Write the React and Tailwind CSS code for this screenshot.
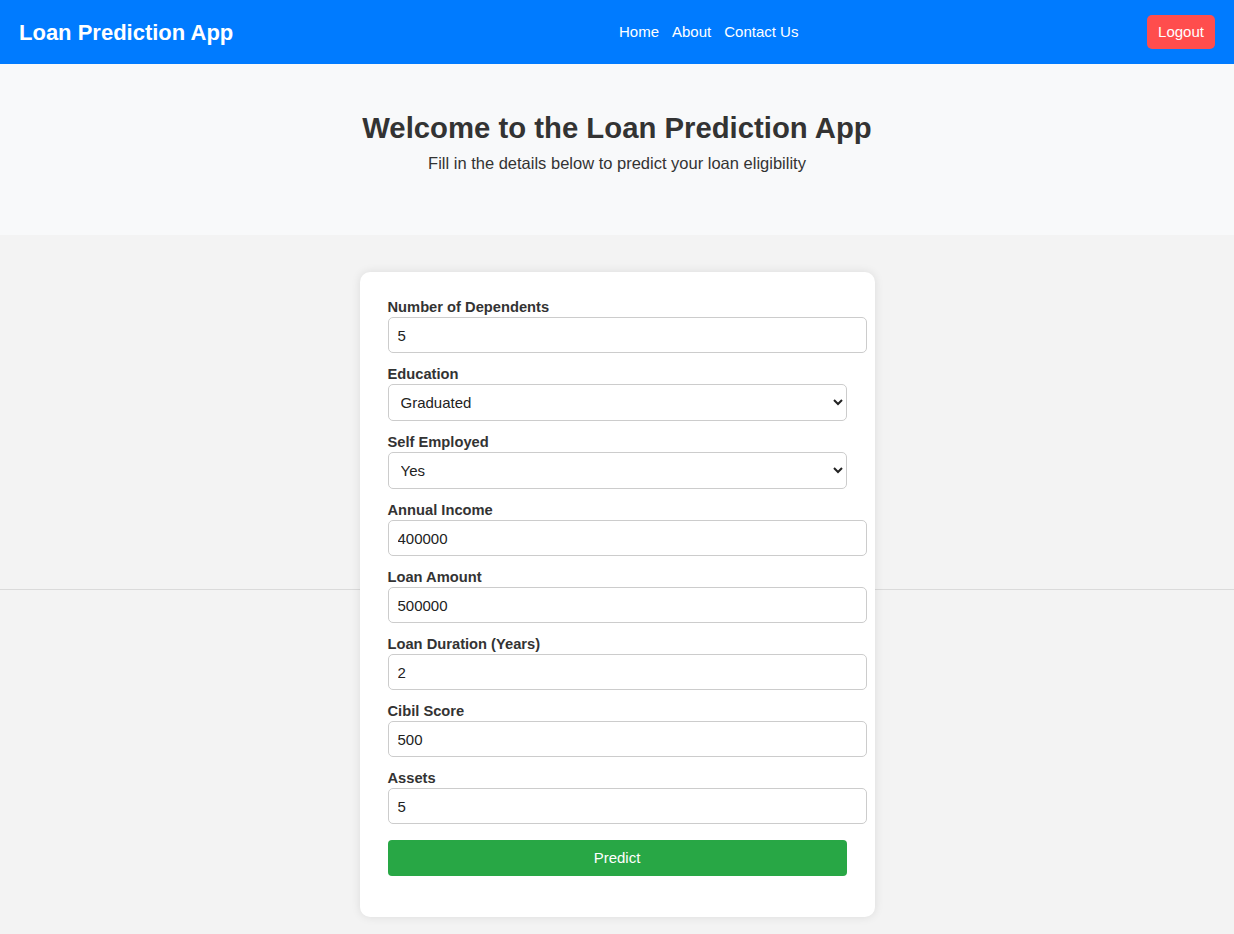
const fields = [
    { label: 'Number of Dependents', type: 'input', value: '5' },
    { label: 'Education', type: 'select', value: 'Graduated', options: ['Graduated', 'Not Graduated'] },
    { label: 'Self Employed', type: 'select', value: 'Yes', options: ['Yes', 'No'] },
    { label: 'Annual Income', type: 'input', value: '400000' },
    { label: 'Loan Amount', type: 'input', value: '500000' },
    { label: 'Loan Duration (Years)', type: 'input', value: '2' },
    { label: 'Cibil Score', type: 'input', value: '500' },
    { label: 'Assets', type: 'input', value: '5' },
];

export default function App() {
    return (
        <div className="min-h-screen bg-[#f3f3f3] font-['Liberation_Sans',Arial,sans-serif] text-[#333]">
            <nav className="flex h-[64px] items-center justify-between bg-[#007bff] px-[19px]">
                <span className="text-[22px] font-bold text-white">Loan Prediction App</span>
                <div className="ml-[37px] flex items-center gap-[13px] text-[15px] text-white">
                    <a href="#">Home</a>
                    <a href="#">About</a>
                    <a href="#">Contact Us</a>
                </div>
                <button className="h-[34px] rounded-[5px] bg-[#ff4d4d] px-[11px] text-[15px] text-white">Logout</button>
            </nav>

            <header className="bg-[#f8f9fa] pb-[63px] pt-[47px] text-center">
                <h1 className="text-[29.3px] font-bold leading-[34px] text-[#333]">Welcome to the Loan Prediction App</h1>
                <p className="mt-[9px] text-[16.5px] leading-[18px] text-[#333]">Fill in the details below to predict your loan eligibility</p>
            </header>

            <main className="bg-[linear-gradient(to_bottom,#f3f3f3_354px,#dadada_354px,#dadada_355px,#f3f3f3_355px)] pb-[18px] pt-[37px]">
                <form className="mx-auto w-[515px] rounded-[10px] bg-white px-[28px] pb-[41px] pt-[27px] shadow-[0_0_10px_rgba(0,0,0,0.1)]">
                    {fields.map((f) => (
                        <div key={f.label} className="mb-[13px]">
                            <label className="mb-[1px] block text-[14.7px] font-bold leading-[17px] text-[#333]">{f.label}</label>
                            {f.type === 'input' ? (
                                <input
                                    type="text"
                                    defaultValue={f.value}
                                    className="box-border h-[36px] w-[479px] rounded-[5px] border border-[#ccc] px-[9px] text-[15px] text-[#222] outline-none"
                                />
                            ) : (
                                <select
                                    defaultValue={f.value}
                                    className="box-border h-[37px] w-full rounded-[5px] border border-[#ccc] bg-white px-[8px] text-[15px] text-[#222] outline-none"
                                >
                                    {f.options.map((o) => (
                                        <option key={o}>{o}</option>
                                    ))}
                                </select>
                            )}
                        </div>
                    ))}
                    <button
                        type="button"
                        className="mt-[3px] h-[36px] w-full rounded-[4px] bg-[#28a745] text-[15px] text-white"
                    >
                        Predict
                    </button>
                </form>
            </main>
        </div>
    );
}
